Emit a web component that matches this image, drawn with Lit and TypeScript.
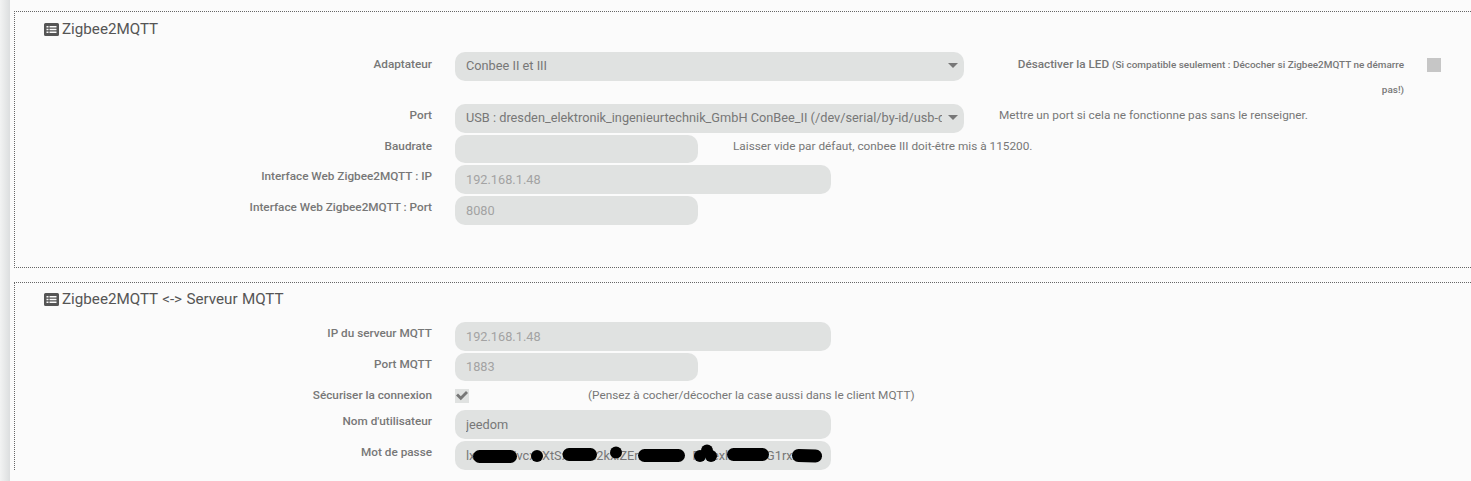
import { LitElement, css, html, svg } from "lit";
import { customElement } from "lit/decorators.js";

const ARROW = html`<svg class="arrow" viewBox="0 0 10 5"><path d="M0 0h10L5 5z"></path></svg>`;

@customElement("app-root")
export class AppRoot extends LitElement {
  static styles = css`
    :host {
      display: block;
      height: 481px;
      overflow: hidden;
      background: #fbfbfb;
      font-family: Roboto, "Liberation Sans", sans-serif;
      font-size: 11.8px;
      color: #777;
    }
    .page {
      margin-left: 10px;
      padding: 11px 0 0 4px;
      height: 470px;
    }
    .shade {
      float: left;
      width: 10px;
      height: 481px;
      background: linear-gradient(90deg, #f2f3f3 0, #dcdedf 100%);
    }
    fieldset {
      margin: 0 0 14px;
      padding: 0;
      min-width: 0;
      border: 0;
      border-top: 1px dotted #666;
      border-left: 1px dotted #666;
    }
    .one {
      height: 255px;
      border-bottom: 1px dotted #666;
    }
    h3 {
      display: flex;
      align-items: center;
      gap: 3px;
      margin: 0;
      padding: 2px 0 0 29px;
      height: 32px;
      box-sizing: border-box;
      font-size: 15.2px;
      font-weight: 400;
      word-spacing: 0.6px;
      color: #555;
    }
    .two h3 {
      padding-top: 1px;
      height: 31px;
    }
    h3 svg {
      width: 15px;
      height: 13px;
      fill: #555;
    }
    .rows {
      display: flex;
      flex-direction: column;
      gap: 2px;
      margin-top: 8px;
    }
    .row {
      display: flex;
      align-items: flex-start;
    }
    .tall {
      height: 50px;
    }
    .tall label:first-child {
      padding-top: 2px;
    }
    .check-row {
      height: 25px;
    }
    label {
      flex: none;
      width: 417px;
      margin-right: 23px;
      text-align: right;
      font-weight: 500;
      font-size: 11.75px;
      line-height: 20px;
      padding-top: 1px;
      color: #777;
    }
    .field {
      position: relative;
      flex: none;
    }
    .wide {
      width: 509px;
    }
    .mid {
      width: 376px;
    }
    .short {
      width: 243px;
    }
    input.text,
    select {
      display: block;
      width: 100%;
      height: 28.67px;
      box-sizing: border-box;
      margin: 0;
      padding: 0 11px;
      border: 0;
      border-radius: 10px;
      outline: 0;
      background: #e0e2e1;
      font: 400 12.75px Roboto, "Liberation Sans", sans-serif;
      color: #777;
      appearance: none;
    }
    select {
      padding: 0 22px 2px 11px;
    }
    input.text::placeholder {
      color: #a3a3a3;
      opacity: 1;
    }
    .arrow {
      position: absolute;
      right: 6px;
      top: 11px;
      width: 10px;
      height: 5px;
      fill: #777;
      pointer-events: none;
    }
    .help {
      flex: none;
      margin-left: 35px;
      line-height: 20px;
      padding-top: 1px;
      color: #777;
    }
    .led {
      flex: none;
      width: 405px;
      margin: 0 23px 0 35px;
      padding: 0;
      line-height: 25px;
    }
    .led small {
      font-size: 9.95px;
    }
    .box {
      flex: none;
      display: block;
      width: 14px;
      height: 14px;
      margin-top: 6px;
      background: #c6c6c6;
    }
    .check-row label,
    .check-row .help {
      padding-top: 1.6px;
    }
    .ticked {
      width: 98px;
      margin-top: 6px;
    }
    .ticked .box {
      position: relative;
      margin: 0;
      background: #e0e2e1;
    }
    .box svg {
      position: absolute;
      left: 0;
      top: -1px;
      width: 14px;
      height: 14px;
      fill: #777;
    }
    .scribble {
      position: absolute;
      left: 0;
      top: 0;
      width: 376px;
      height: 29px;
      overflow: visible;
      pointer-events: none;
    }
  `;

  private listIcon() {
    return html`<svg viewBox="0 0 15 13">
      <path
        fill-rule="evenodd"
        d="M1.500 0h12A1.500 1.500 0 0 1 15 1.500v10a1.500 1.500 0 0 1-1.500 1.500h-12A1.500 1.500 0 0 1 0 11.500v-10A1.500 1.500 0 0 1 1.500 0zM2.500 3v1.500h2V3zm3 0v1.500h7V3zM2.500 5.800v1.500h2V5.800zm3 0v1.500h7V5.800zM2.500 8.600v1.500h2V8.600zm3 0v1.500h7V8.600z"
      ></path>
    </svg>`;
  }

  private scribble() {
    // black marker strokes hiding the password, coordinates relative to the input
    const strokes = [
      [24.5, 15.5, 55.5, 15.5],
      [114, 13.5, 135.5, 13.5],
      [189.5, 14.5, 223.5, 14.5],
      [278.5, 13.5, 307.5, 13.5],
      [343.5, 14.5, 360.5, 15],
    ];
    const dots = [
      [82, 15],
      [161, 11.5],
      [252, 9.5],
      [245, 15],
      [256, 15],
    ];
    return html`<svg class="scribble" viewBox="0 0 376 29">
      ${strokes.map(
        ([x1, y1, x2, y2]) =>
          svg`<line x1=${x1} y1=${y1} x2=${x2} y2=${y2} stroke="#000" stroke-width="13" stroke-linecap="round"></line>`
      )}
      ${dots.map(([cx, cy]) => svg`<circle cx=${cx} cy=${cy} r="6"></circle>`)}
    </svg>`;
  }

  render() {
    return html`
      <div class="shade"></div>
      <div class="page">
        <fieldset class="one">
          <h3>${this.listIcon()}Zigbee2MQTT</h3>
          <div class="rows">
            <div class="row tall">
              <label>Adaptateur</label>
              <div class="field wide">
                <select><option>Conbee II et III</option></select>${ARROW}
              </div>
              <label class="led"
                >Désactiver la LED
                <small>(Si compatible seulement : Décocher si Zigbee2MQTT ne démarre pas!)</small></label
              >
              <span class="box"></span>
            </div>
            <div class="row">
              <label>Port</label>
              <div class="field wide">
                <select>
                  <option>USB : dresden_elektronik_ingenieurtechnik_GmbH ConBee_II (/dev/serial/by-id/usb-dresden_elektronik)</option></select
                >${ARROW}
              </div>
              <span class="help">Mettre un port si cela ne fonctionne pas sans le renseigner.</span>
            </div>
            <div class="row">
              <label>Baudrate</label>
              <div class="field short"><input class="text" /></div>
              <span class="help">Laisser vide par défaut, conbee III doit-être mis à 115200.</span>
            </div>
            <div class="row">
              <label>Interface Web Zigbee2MQTT : IP</label>
              <div class="field mid"><input class="text" placeholder="192.168.1.48" /></div>
            </div>
            <div class="row">
              <label>Interface Web Zigbee2MQTT : Port</label>
              <div class="field short"><input class="text" placeholder="8080" /></div>
            </div>
          </div>
        </fieldset>
        <fieldset class="two">
          <h3>${this.listIcon()}Zigbee2MQTT &lt;-&gt; Serveur MQTT</h3>
          <div class="rows">
            <div class="row">
              <label>IP du serveur MQTT</label>
              <div class="field mid"><input class="text" placeholder="192.168.1.48" /></div>
            </div>
            <div class="row">
              <label>Port MQTT</label>
              <div class="field short"><input class="text" placeholder="1883" /></div>
            </div>
            <div class="row check-row">
              <label>Sécuriser la connexion</label>
              <div class="field ticked">
                <span class="box">
                  <svg viewBox="0 0 14 14"><path d="M1 7.500l2-2 2.800 2.800L11 3l2 2-7.200 7.200z"></path></svg>
                </span>
              </div>
              <span class="help">(Pensez à cocher/décocher la case aussi dans le client MQTT)</span>
            </div>
            <div class="row">
              <label>Nom d'utilisateur</label>
              <div class="field mid"><input class="text" value="jeedom" /></div>
            </div>
            <div class="row">
              <label>Mot de passe</label>
              <div class="field mid">
                <input class="text" value="lxxxxxxxivcxxXtSxxxxxi2kxiZErxxxxxxx   FxxexlxxxxxxG1rxxxxx" />
                ${this.scribble()}
              </div>
            </div>
          </div>
        </fieldset>
      </div>
    `;
  }
}
